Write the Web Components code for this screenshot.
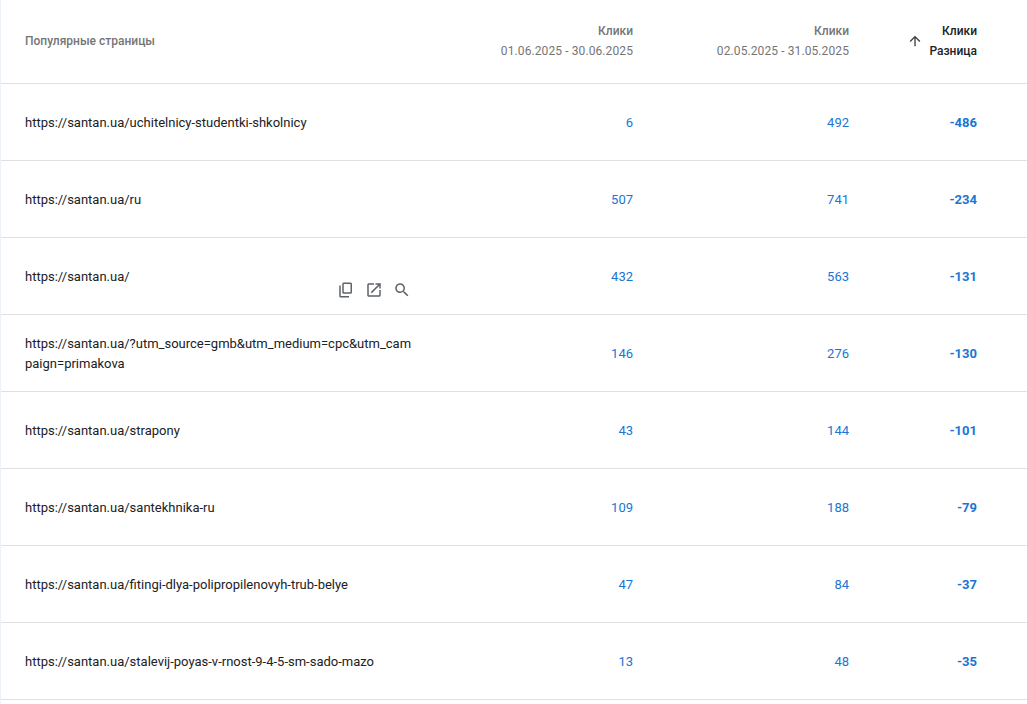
<!DOCTYPE html>
<html><head><meta charset="utf-8"><style>
html,body{margin:0;background:#fff}
body{font-family:Roboto,"Liberation Sans",sans-serif;height:704px;overflow:hidden}
</style></head><body>
<template id="t-table"><style>
:host{display:block;border-left:1px solid #edf1f8;height:704px;box-sizing:border-box;font:13px/20px Roboto,"Liberation Sans",sans-serif}
</style><slot></slot></template>
<template id="t-head"><style>
:host{display:grid;grid-template-columns:424px 208px 216px 128px;height:84px;box-sizing:border-box;padding-bottom:1px;border-bottom:1px solid #e0e0e0;align-items:center;font-size:12px;font-weight:500;color:#757575}
.first{padding-left:24px}
.num{text-align:right}
.num span{display:block}
.date{font-weight:400;letter-spacing:.1px}
.sorted{color:#202124;display:flex;justify-content:flex-end;align-items:center;gap:6px}
svg{display:block;width:16px;height:16px;fill:#3c4043}
</style><div class="first">Популярные страницы</div>
<div class="num"><span>Клики</span><span class="date">01.06.2025 - 30.06.2025</span></div>
<div class="num"><span>Клики</span><span class="date">02.05.2025 - 31.05.2025</span></div>
<div class="sorted"><svg viewBox="0 0 24 24"><path d="M4 12l1.41 1.41L11 7.83V20h2V7.83l5.58 5.59L20 12l-8-8-8 8z"/></svg><div class="num"><span>Клики</span><span>Разница</span></div></div></template>
<template id="t-row"><style>
:host{display:grid;grid-template-columns:424px 208px 216px 128px;height:77px;box-sizing:border-box;padding-top:2px;border-bottom:1px solid #e0e0e0;align-items:center;position:relative;color:#202124}
.url{padding-left:24px;width:390px;word-break:break-all}
.n{text-align:right;color:#1976d2}
.d{font-weight:700}
</style><div class="url"><slot></slot></div><div class="n" id="a"></div><div class="n" id="b"></div><div class="n d" id="c"></div></template>
<template id="t-tools"><style>
:host{position:absolute;left:336px;top:43px;display:flex;gap:10px}
svg{display:block;width:18px;height:18px;fill:#5f6368}
</style>
<svg viewBox="0 0 24 24"><path fill-rule="evenodd" d="M9 2h9a2 2 0 0 1 2 2v11a2 2 0 0 1-2 2H9a2 2 0 0 1-2-2V4a2 2 0 0 1 2-2zm0 2v11h9V4H9zM3 6h2v14h11v2H5a2 2 0 0 1-2-2V6z"/></svg>
<svg viewBox="0 0 24 24"><path d="M19 19H5V5h7V3H5c-1.11 0-2 .9-2 2v14c0 1.1.89 2 2 2h14c1.1 0 2-.9 2-2v-7h-2v7zM14 3v2h3.59l-9.83 9.83 1.41 1.41L19 6.41V10h2V3h-7z"/></svg>
<svg viewBox="0 0 24 24"><path d="M15.5 14h-.79l-.28-.27C15.41 12.59 16 11.11 16 9.5 16 5.91 13.09 3 9.5 3S3 5.91 3 9.5 5.91 16 9.5 16c1.61 0 3.09-.59 4.23-1.57l.27.28v.79l5 4.99L20.49 19l-4.99-5zm-6 0C7.01 14 5 11.99 5 9.5S7.01 5 9.5 5 14 7.01 14 9.5 11.99 14 9.5 14z"/></svg></template>
<x-table>
<x-head></x-head>
<x-row a="6" b="492" c="-486">https://santan.ua/uchitelnicy-studentki-shkolnicy</x-row>
<x-row a="507" b="741" c="-234">https://santan.ua/ru</x-row>
<x-row a="432" b="563" c="-131">https://santan.ua/<x-tools></x-tools></x-row>
<x-row a="146" b="276" c="-130">https://santan.ua/?utm_source=gmb&amp;utm_medium=cpc&amp;utm_campaign=primakova</x-row>
<x-row a="43" b="144" c="-101">https://santan.ua/strapony</x-row>
<x-row a="109" b="188" c="-79">https://santan.ua/santekhnika-ru</x-row>
<x-row a="47" b="84" c="-37">https://santan.ua/fitingi-dlya-polipropilenovyh-trub-belye</x-row>
<x-row a="13" b="48" c="-35">https://santan.ua/stalevij-poyas-v-rnost-9-4-5-sm-sado-mazo</x-row>
</x-table>
<script>
class Base extends HTMLElement{
  constructor(){super();const id=this.constructor.tpl;this.attachShadow({mode:'open'}).appendChild(document.getElementById(id).content.cloneNode(true));}
}
class XTable extends Base{static tpl='t-table'}
class XHead extends Base{static tpl='t-head'}
class XTools extends Base{static tpl='t-tools'}
class XRow extends Base{static tpl='t-row';
  connectedCallback(){for(const k of ['a','b','c'])this.shadowRoot.getElementById(k).textContent=this.getAttribute(k);}
}
customElements.define('x-table',XTable);customElements.define('x-head',XHead);customElements.define('x-tools',XTools);customElements.define('x-row',XRow);
</script>
</body></html>
